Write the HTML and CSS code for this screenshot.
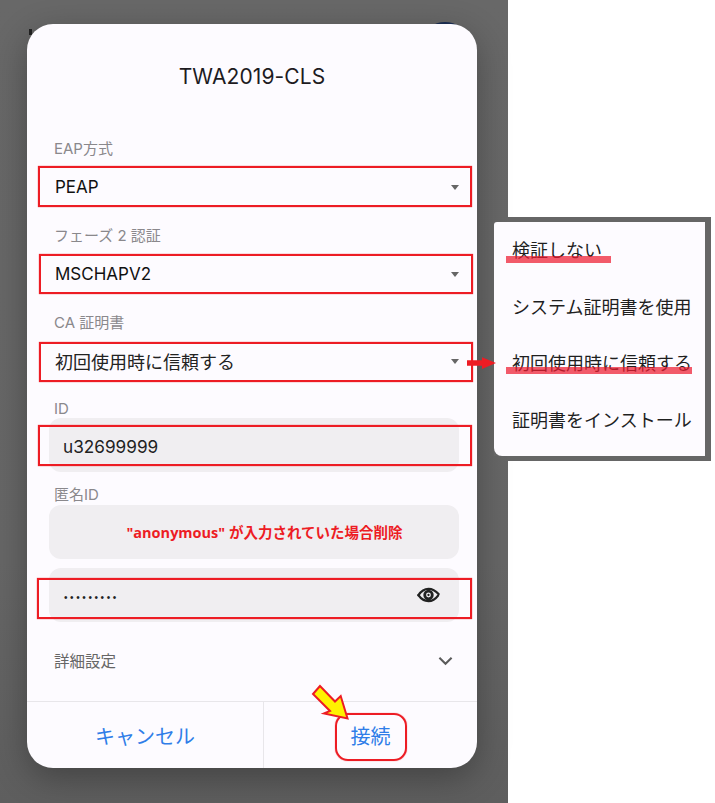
FILE: index.html
```html
<!DOCTYPE html>
<html lang="ja">
<head>
<meta charset="utf-8">
<title>TWA2019-CLS</title>
<link rel="stylesheet" href="styles.css">
</head>
<body>
<div class="page">
  <div class="screen">
    <span class="behind-avatar"></span>
    <span class="behind-mark"></span>
    <section class="dialog">
      <h1 class="title">TWA2019-CLS</h1>
      <div class="label label-first">EAP方式</div>
      <div class="select"><span>PEAP</span><i class="caret"></i></div>
      <div class="label label-select">フェーズ 2 認証</div>
      <div class="select"><span>MSCHAPV2</span><i class="caret"></i></div>
      <div class="label label-select">CA 証明書</div>
      <div class="select"><span class="select-cjk">初回使用時に信頼する</span><i class="caret"></i></div>
      <div class="label label-id">ID</div>
      <div class="input"><span class="value">u32699999</span></div>
      <div class="label label-anon">匿名ID</div>
      <div class="input input-note"><span class="note">"anonymous" が入力されていた場合削除</span></div>
      <div class="input input-pass">
        <span class="dots">•••••••••</span>
        <svg class="eye" viewBox="0 0 24 16" aria-hidden="true">
          <path d="M1.5 8.2C4.5 3.6 8 1.6 12 1.6s7.5 2 10.5 5.4" fill="none" stroke="#222" stroke-width="2.4" stroke-linecap="round"/>
          <path d="M1.5 8.2C4.5 12.6 8 14.4 12 14.4s7-1.8 10-5.8" fill="none" stroke="#222" stroke-width="2.4" stroke-linecap="round"/>
          <circle cx="12" cy="8" r="5.4" fill="#222"/>
          <circle cx="12" cy="8" r="2.5" fill="#f0eef1"/>
          <circle cx="12" cy="8" r="1.2" fill="#222"/>
        </svg>
      </div>
      <div class="advanced">
        <span>詳細設定</span>
        <svg class="chevron" viewBox="0 0 16 10" aria-hidden="true"><path d="M1.5 1.5 8 8l6.5-6.5" fill="none" stroke="#5c5c5c" stroke-width="2.2"/></svg>
      </div>
      <div class="actions">
        <button class="action action-left">キャンセル</button>
        <button class="action">接続</button>
      </div>
    </section>
  </div>

  <div class="popup-frame">
    <ul class="popup">
      <li>検証しない</li>
      <li>システム証明書を使用</li>
      <li>初回使用時に信頼する</li>
      <li>証明書をインストール</li>
    </ul>
  </div>

  <span class="mark box-1"></span>
  <span class="mark box-2"></span>
  <span class="mark box-3"></span>
  <span class="mark box-4"></span>
  <span class="mark box-5"></span>
  <span class="mark box-connect"></span>
  <span class="line line-1"></span>
  <span class="line line-2"></span>
  <svg class="overlay" viewBox="0 0 715 803" aria-hidden="true">
    <path d="M467 360.3H482V357.3L496 363 482 369V365.7H467Z" fill="#ed1c24"/>
    <path d="M320 686 313 694 330 711 324 713.5 347.5 718.5 340.7 696 335 701.5Z" fill="#fff200" stroke="#ed1c24" stroke-width="2" stroke-linejoin="miter"/>
  </svg>
</div>
</body>
</html>
```
FILE: styles.css
```css
* { box-sizing: border-box; }
html, body { margin: 0; padding: 0; background: #fff; }
body { font-family: Inter, "Noto Sans CJK JP", sans-serif; overflow: hidden; }
.page { position: relative; width: 715px; height: 803px; background: #fff; overflow: hidden; }
.screen {
  position: relative;
  width: 508px;
  height: 803px;
  padding: 24px 0 0 27px;
  background: linear-gradient(#686868, #666 70%, #5e5e5e);
}
.behind-avatar { position: absolute; left: 424px; top: 22px; width: 42px; height: 30px; border-radius: 50%; background: #1c2f55; }
.behind-mark { position: absolute; left: 29px; top: 29px; width: 3px; height: 6px; background: #222; }
.dialog {
  position: relative;
  display: flex;
  flex-direction: column;
  width: 450px;
  height: 744px;
  border-radius: 26px;
  background: #fdfbff;
  box-shadow: 0 10px 34px rgba(0, 0, 0, .3);
  overflow: hidden;
}
.title {
  margin: 38px 0 47px;
  font-size: 21px;
  line-height: 30px;
  font-weight: 400;
  text-align: center;
  color: #1d1b1f;
  letter-spacing: .1px;
}
.label { height: 20px; padding-left: 27px; font-size: 15px; line-height: 20px; color: #8a888c; }
.label-select { margin-top: 19px; }
.label-id { height: 19px; margin-top: 18px; }
.label-anon { height: 19px; margin-top: 13px; }
.select {
  display: flex;
  align-items: center;
  justify-content: space-between;
  height: 40px;
  margin-top: 8px;
  padding: 0 18px 0 28px;
  font-size: 17px;
  color: #111;
}
.select-cjk { font-size: 18px; color: #222; }
.caret { width: 0; height: 0; border-left: 4px solid transparent; border-right: 4px solid transparent; border-top: 5px solid #666; }
.input {
  display: flex;
  align-items: center;
  justify-content: space-between;
  width: 410px;
  height: 54px;
  margin: 0 0 0 22px;
  padding: 0 19px 0 14px;
  border-radius: 12px;
  background: #f0eef1;
}
.value { padding-top: 3px; font-size: 17.2px; color: #222; }
.input-note { margin-top: 1px; justify-content: center; padding: 0 0 2px 21px; }
.note { font-family: "Open Sans", "Noto Sans CJK JP", sans-serif; font-size: 14.5px; font-weight: 700; color: #ed1c24; }
.input-pass { margin-top: 9px; padding-left: 15px; }
.dots { font-family: "Liberation Sans", sans-serif; font-size: 10px; letter-spacing: 2.6px; color: #222; margin-top: 4px; }
.eye { width: 23px; height: 16px; }
.advanced {
  display: flex;
  align-items: center;
  justify-content: space-between;
  height: 79px;
  padding: 0 24px 4px 27px;
  font-size: 15.5px;
  color: #666;
}
.chevron { width: 15px; height: 10px; margin-top: 3px; }
.actions { display: flex; flex: 1; border-top: 1px solid #e8e6ea; }
.action {
  flex: 1;
  padding: 0;
  border: 0;
  background: none;
  font-family: inherit;
  font-size: 20px;
  color: #2f7de8;
}
.action-left { flex: 0 0 237px; border-right: 1px solid #e8e6ea; }
.popup-frame {
  position: absolute;
  left: 494px;
  top: 217px;
  width: 217px;
  height: 244px;
  padding: 5px 6px 5px 0;
  background: #666;
  clip-path: polygon(14px 0, 100% 0, 100% 100%, 14px 100%, 14px 239px, 0 239px, 0 5px, 14px 5px);
}
.popup {
  display: flex;
  flex-direction: column;
  height: 234px;
  margin: 0;
  padding: 1px 0 0 18px;
  list-style: none;
  border-radius: 3px 0 0 8px;
  background: #fdfbff;
  font-size: 18px;
  color: #1f1f1f;
}
.popup li { height: 56.5px; line-height: 56.5px; white-space: nowrap; }
.mark { position: absolute; border: 2px solid #ed1c24; box-shadow: 0 0 1px rgba(237, 28, 36, .8); }
.box-1 { left: 38px; top: 166px; width: 434px; height: 41px; }
.box-2 { left: 39px; top: 254px; width: 434px; height: 40px; }
.box-3 { left: 39px; top: 342px; width: 434px; height: 40px; }
.box-4 { left: 38px; top: 425px; width: 434px; height: 41px; }
.box-5 { left: 37px; top: 578px; width: 435px; height: 41px; }
.box-connect { left: 335px; top: 713px; width: 72px; height: 48px; border-radius: 13px; }
.line { position: absolute; height: 7px; background: rgba(237, 28, 48, .72); }
.line-1 { left: 506px; top: 256px; width: 105px; }
.line-2 { left: 506px; top: 367px; width: 186px; }
.overlay { position: absolute; left: 0; top: 0; width: 715px; height: 803px; pointer-events: none; }
```
